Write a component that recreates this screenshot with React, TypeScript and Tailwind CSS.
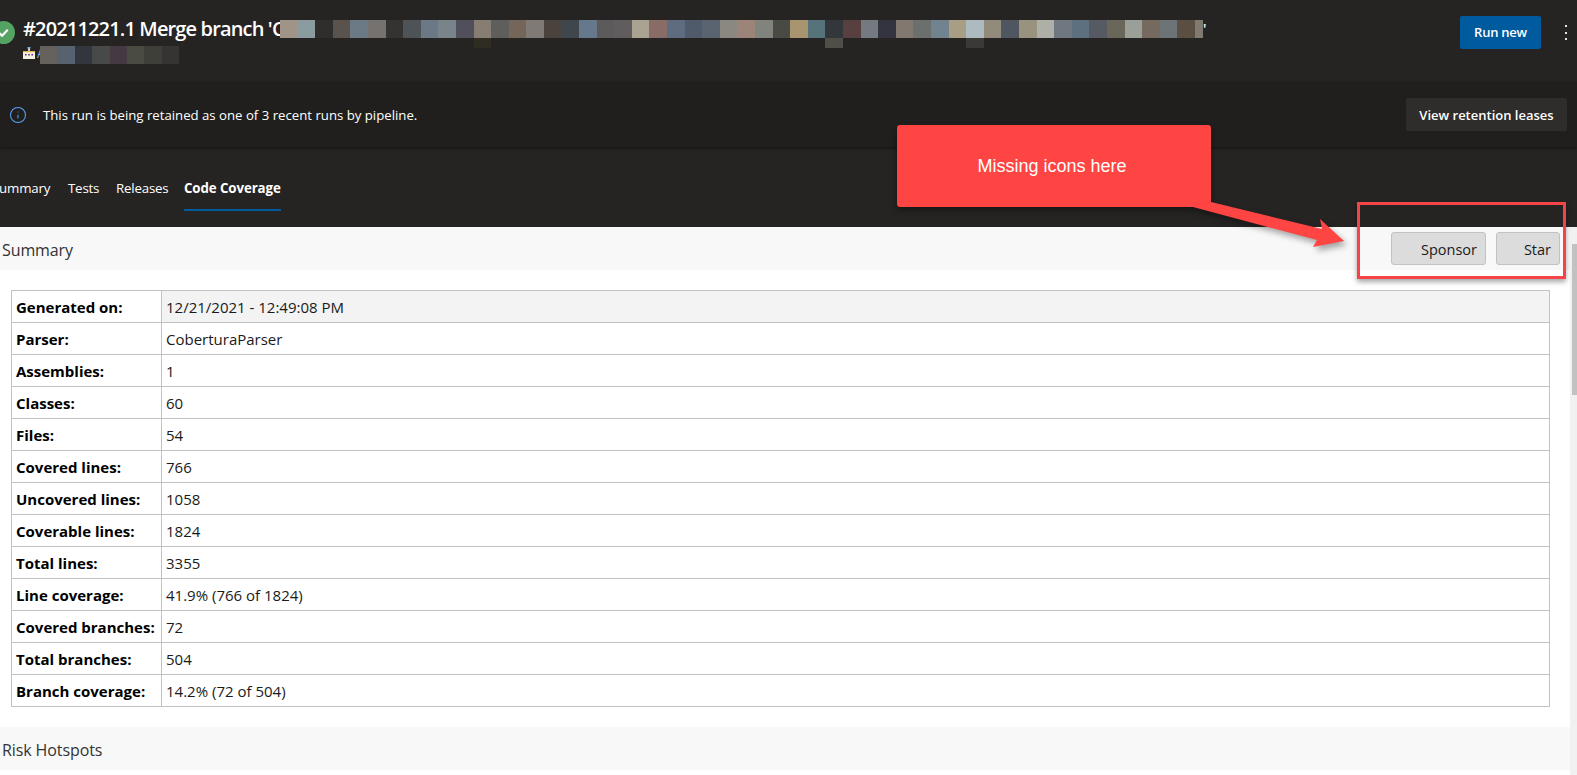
import React from 'react';
import { Info } from 'lucide-react';

const titleBlocks = [
  '#a09488', '#8a9ca0', '#2f2e2d', '#5a524c', '#6b7a85', '#767270', '#343332', '#4e5358', '#6b7885',
  '#79848a', '#514f5c', '#877d72', '#5e5f5d', '#75665a', '#7f7a75', '#4a433d', '#3f464c', '#66798c',
  '#5c5a5a', '#615d5f', '#aaa392', '#8a6c66', '#5f6b80', '#4f5a6a', '#5a6470', '#8a8880', '#9c8578',
  '#80847c', '#4a4a44', '#a8946e', '#56727a', '#33363a', '#57403f', '#747b80', '#343340', '#83786f',
  '#6b706f', '#70838f', '#a89e84', '#adbac0', '#928a7a', '#50565f', '#98927f', '#aeb0a8', '#6f7880',
  '#5c7080', '#565a62', '#68675a', '#9a9f98', '#766a5e', '#6d7478', '#5a4f40',
];

const subBlocks = ['#65625e', '#566270', '#33363c', '#474a48', '#443a44', '#4a4c42', '#3f3f3a', '#353432'];

const rows = [
  ['Generated on:', '12/21/2021 - 12:49:08 PM'],
  ['Parser:', 'CoberturaParser'],
  ['Assemblies:', '1'],
  ['Classes:', '60'],
  ['Files:', '54'],
  ['Covered lines:', '766'],
  ['Uncovered lines:', '1058'],
  ['Coverable lines:', '1824'],
  ['Total lines:', '3355'],
  ['Line coverage:', '41.9% (766 of 1824)'],
  ['Covered branches:', '72'],
  ['Total branches:', '504'],
  ['Branch coverage:', '14.2% (72 of 504)'],
];

const App: React.FC = () => {
  return (
    <div className="relative flex h-[775px] w-[1577px] flex-col overflow-hidden bg-white font-['Open_Sans',sans-serif]">
      {/* page header */}
      <header className="flex h-[82px] shrink-0 items-start bg-[#252423]">
        <div className="ml-[-8px] mt-[21px] flex h-[23px] w-[23px] shrink-0 items-center justify-center rounded-full bg-[#55a362]">
          <svg viewBox="0 0 16 16" className="h-[15px] w-[15px]" fill="none" stroke="white" strokeWidth="2.2">
            <path d="M3.5 8.5l3 3 6-6.5" />
          </svg>
        </div>
        <div className="ml-2 flex-1">
          <div className="mt-[20px] flex h-[18px] items-center">
            <span className="w-[257px] shrink-0 whitespace-nowrap text-[20px] font-semibold tracking-[-0.85px] text-white">
              #20211221.1 Merge branch 'C
            </span>
            <div className="flex h-[18px]">
              {titleBlocks.map((color, i) => (
                <div key={i} className="relative h-[18px] w-[17.6px]" style={{ backgroundColor: color }}>
                  {i === 11 && <div className="absolute left-0 top-[18px] h-[10px] w-[17.6px] bg-[#2f2c22]" />}
                  {i === 31 && <div className="absolute left-0 top-[18px] h-[10px] w-[17.6px] bg-[#4f4e48]" />}
                  {i === 39 && <div className="absolute left-0 top-[18px] h-[10px] w-[17.6px] bg-[#3a3935]" />}
                </div>
              ))}
              <div className="h-[18px] w-[8px] bg-[#807a70]" />
            </div>
            <span className="self-start text-[14px] leading-[18px] font-semibold text-white">'</span>
          </div>
          <div className="mt-[8px] flex h-[18px] items-start">
            <svg viewBox="0 0 12 12" className="mt-[1px] h-[12px] w-[12px]">
              <path d="M5.2 0h1.6v4H5.2z" fill="#f4f4f4" />
              <path d="M4.5 0h3v1.4h-3z" fill="#7fb0e8" />
              <path d="M0 4.5h12V12H0z" fill="#f6f0e0" />
              <path d="M0 4h12v1.2H0z" fill="#e0b840" />
              <path d="M2 7h1.6v1.6H2zM5.2 7h1.6v1.6H5.2zM8.4 7H10v1.6H8.4z" fill="#6a2a8a" />
            </svg>
            <span className="ml-[2px] mt-[1px] w-[3px] overflow-hidden text-[12px] leading-[14px] text-[#8ab8e8]">A</span>
            <span className="flex">
              {subBlocks.map((color, i) => (
                <div key={i} className="h-[18px] w-[17.4px]" style={{ backgroundColor: color }} />
              ))}
            </span>
          </div>
        </div>
        <button className="mt-[16px] h-[33px] w-[81px] rounded-[2px] bg-[#005a9e] pt-[1px] text-[13px] font-semibold tracking-[-0.25px] text-white">
          Run new
        </button>
        <div className="ml-[24px] mr-[10px] mt-[25px] flex h-[15px] w-[2px] flex-col justify-between">
          <span className="h-[2px] w-[2px] bg-[#e5e5e5]" />
          <span className="h-[2px] w-[2px] bg-[#e5e5e5]" />
          <span className="h-[2px] w-[2px] bg-[#e5e5e5]" />
        </div>
      </header>

      {/* retention banner */}
      <div className="z-10 flex h-[65px] shrink-0 items-center bg-[#201f1e] pl-[9px] pr-[10px] shadow-[0_1px_3px_rgba(0,0,0,0.5)]">
        <Info className="h-[18px] w-[18px] text-[#5aa2f5]" strokeWidth={1.4} />
        <span className="ml-[16px] mt-[3px] flex-1 text-[13.2px] text-white">
          This run is being retained as one of 3 recent runs by pipeline.
        </span>
        <button className="h-[33px] w-[161px] rounded-[2px] bg-[#2e2d2c] pt-[2px] text-[13px] font-semibold text-white">
          View retention leases
        </button>
      </div>

      {/* tabs */}
      <nav className="flex h-[80px] shrink-0 bg-[#252423] text-[13.3px] tracking-[-0.2px] text-white">
        <span className="ml-[-8px] mt-[32px] w-[58px]">Summary</span>
        <span className="ml-[18px] mt-[32px] w-[30px]">Tests</span>
        <span className="ml-[18px] mt-[32px] w-[52px]">Releases</span>
        <div className="ml-[16px] mt-[32px] h-[32px] w-[97px] whitespace-nowrap border-b-2 border-[#005a9e] font-bold tracking-[-0.1px]">
          Code Coverage
        </div>
      </nav>

      {/* report */}
      <div className="flex min-h-0 flex-1">
        <main className="flex-1 text-[15px] text-[#1a1a1a]">
          <div className="flex h-[43px] items-center bg-[#f8f8f8] pl-[2px] pr-[10px]">
            <h1 className="flex-1 pt-[2px] text-[16px] tracking-[-0.1px] text-[#333]">Summary</h1>
            <button className="flex h-[33px] w-[95px] items-center justify-end rounded-[3px] border border-[#c2c2c2] bg-[#dcdcdc] pr-[8px] pt-[2px] text-[14.5px]">
              Sponsor
            </button>
            <button className="ml-[10px] flex h-[33px] w-[64px] items-center justify-end rounded-[3px] border border-[#c2c2c2] bg-[#dcdcdc] pr-[8px] pt-[2px] text-[14.5px]">
              Star
            </button>
          </div>
          <div className="ml-[11px] mt-[20px] w-[1539px]">
            <table className="w-full table-fixed border-collapse border border-[#c2c2c2]">
              <tbody>
                {rows.map(([label, value], i) => (
                  <tr key={label} className="h-[32px]">
                    <th className="w-[150px] whitespace-nowrap border border-[#c2c2c2] pl-[4px] pt-[2px] text-left text-[15px] font-bold text-black">
                      {label}
                    </th>
                    <td className={`border border-[#c2c2c2] pl-[4px] pt-[2px] ${i === 0 ? 'bg-[#f3f3f3]' : ''}`}>
                      {value}
                    </td>
                  </tr>
                ))}
              </tbody>
            </table>
          </div>
          <div className="mt-[20px] flex h-[43px] items-center bg-[#f8f8f8] pl-[2px]">
            <h1 className="pt-[2px] text-[16px] tracking-[-0.1px] text-[#333]">Risk Hotspots</h1>
          </div>
        </main>
        <div className="flex w-[7px] shrink-0 flex-col items-end bg-[#f1f1f1]">
          <div className="mt-[17px] h-[151px] w-[5px] bg-[#c1c1c1]" />
        </div>
      </div>

      {/* annotation over the screenshot */}
      <div className="absolute left-[897px] top-[125px] z-20 flex h-[82px] w-[314px] items-start justify-center rounded-[3px] bg-[#ff4444] pr-[4px] pt-[29px] font-['Liberation_Sans',sans-serif] text-[18px] leading-[24px] text-white shadow-[0_3px_6px_rgba(0,0,0,0.4)]">
        Missing icons here
      </div>
      <svg className="absolute left-[1170px] top-[190px] z-20" width="200" height="70" viewBox="0 0 200 70">
        <path
          d="M41 12L152 39L150 29L174 51L143 57L147 50L23 17Z"
          fill="#ff4444"
          className="drop-shadow-[3px_4px_3px_rgba(0,0,0,0.35)]"
        />
      </svg>
      <div className="absolute left-[1357px] top-[202px] z-20 h-[77px] w-[209px] border-[3px] border-[#f4444a] shadow-[0_3px_5px_rgba(0,0,0,0.35)]" />
    </div>
  );
};

export default App;
